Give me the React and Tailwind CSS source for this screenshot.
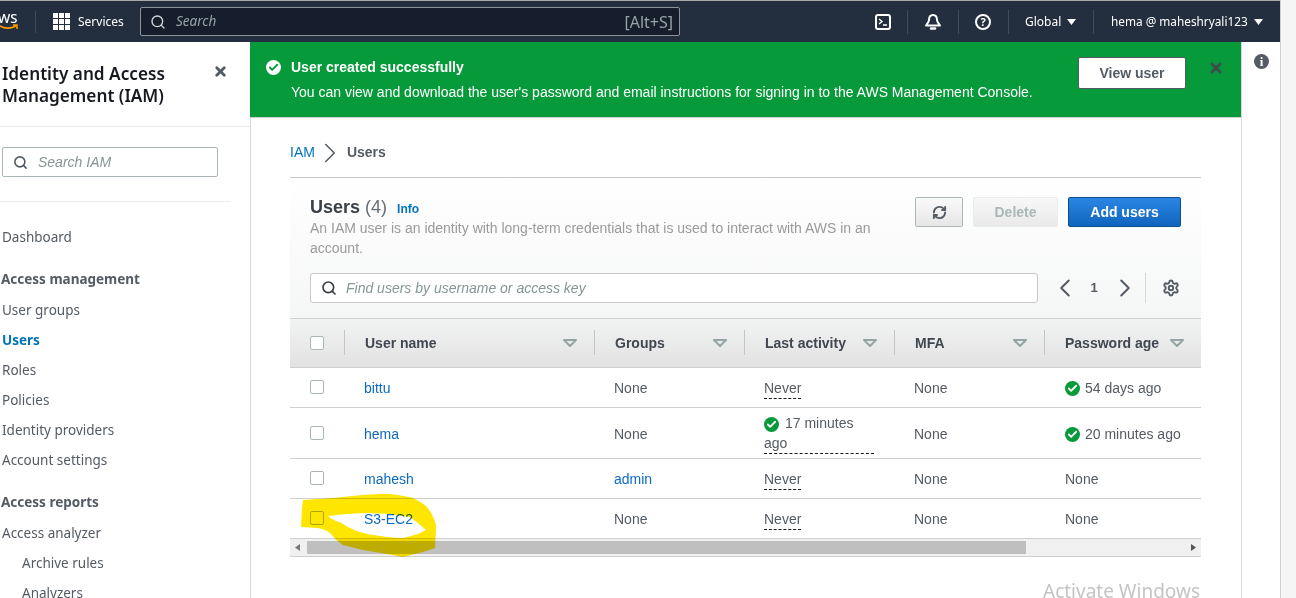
import React from "react";
import { Search, X, ChevronLeft, ChevronRight, RefreshCw, Settings, Check } from "lucide-react";

const sans = "font-['Noto_Sans','Open_Sans',sans-serif]";
const arial = "font-['Liberation_Sans',Arial,sans-serif]";

function NavLink({ children, active, indent }) {
  return (
    <div
      className={`h-[30px] flex items-center text-[13.5px] ${indent ? "pl-[22px]" : "pl-[2px]"} ${
        active ? "text-[#0073bb] font-bold" : "text-[#545b64]"
      }`}
    >
      {children}
    </div>
  );
}

function NavHeading({ children }) {
  return <div className="pl-[1px] mt-[12px] h-[31px] flex items-center text-[13.5px] font-bold text-[#545b64]">{children}</div>;
}

function CheckDot({ className = "" }) {
  return (
    <span className={`inline-flex items-center justify-center w-[15px] h-[15px] rounded-full bg-[#069a3a] shrink-0 ${className}`}>
      <Check size={11} strokeWidth={4} className="text-white" />
    </span>
  );
}

function HeadCell({ label, w, last }) {
  return (
    <div className={`relative flex items-center justify-between h-full shrink-0 pl-5 ${w} ${last ? "pr-[17px]" : "pr-[18px]"}`}>
      <span className="text-[14px] font-bold text-[#414750] whitespace-nowrap">{label}</span>
      <svg width="14" height="8" viewBox="0 0 14 8" className="shrink-0">
        <path d="M1 1h12L7 7z" fill="none" stroke="#95a5a6" strokeWidth="2" strokeLinejoin="round" />
      </svg>
      {!last && <span className="absolute right-0 top-[11px] bottom-[12px] w-px bg-[#c5c5c5]" />}
    </div>
  );
}

function Never() {
  return <span className="border-b border-dashed border-[#16191f] text-[#545b64] leading-[19px] inline-block">Never</span>;
}

function Row({ name, groups, activity, pwd, h }) {
  return (
    <div className={`flex items-center border-b border-[#cfd0d0] text-[14px] text-[#545b64] ${h}`}>
      <div className="w-[74px] pl-5 shrink-0">
        <div className="w-[14px] h-[14px] -mt-[2px] rounded-[2px] border border-[#aab7b8] bg-white" />
      </div>
      <div className="w-[250px] text-[#0d6ac0] shrink-0">{name}</div>
      <div className={`w-[150px] shrink-0 ${groups === "admin" ? "text-[#0d6ac0]" : ""}`}>{groups}</div>
      <div className="w-[150px] shrink-0">{activity}</div>
      <div className="w-[151px] shrink-0">None</div>
      <div className="flex-1 flex items-center gap-[5px] whitespace-nowrap">{pwd}</div>
    </div>
  );
}

export default function App() {
  return (
    <div className={`relative w-[1296px] h-[598px] overflow-hidden flex bg-white ${arial}`}>
      <div className="w-[1281px] shrink-0 flex flex-col border-r border-[#d0d0d0]">
        {/* top nav */}
        <header className={`h-[42px] shrink-0 border-t border-[#a9a9a9] bg-[#232f3e] flex items-center text-white ${sans}`}>
          <div className="w-[36px] h-[22px] shrink-0 border-r border-[#3f4b5b] relative overflow-hidden">
            <span className="absolute left-[-10px] top-[-2px] text-[13px] font-medium leading-[18px]">AWS</span>
            <svg className="absolute left-[-3px] top-[13px]" width="22" height="7" viewBox="0 0 22 7">
              <path d="M1 1c6 4 12 4 18 1M16 1h4v4" fill="none" stroke="#f90" strokeWidth="1.5" />
            </svg>
          </div>
          <div className="ml-[17px] shrink-0 grid grid-cols-3 gap-[1px] w-[17px]">
            {[...Array(9)].map((_, i) => (
              <span key={i} className="w-[5px] h-[5px] bg-white" />
            ))}
          </div>
          <span className="ml-[8px] text-[12px] w-[46px] whitespace-nowrap">Services</span>
          <div className="ml-[16px] w-[540px] h-[29px] shrink-0 flex items-center bg-[#161e2d] border border-[#8d9399] rounded-[2px] pl-[9px] pr-[6px]">
            <Search size={16} strokeWidth={2} className="text-[#d5dbdb]" />
            <span className="ml-[10px] text-[13.5px] italic text-[#95a5a6]">Search</span>
            <span className="ml-auto text-[16px] text-[#95a5a6]">[Alt+S]</span>
          </div>
          <div className="ml-[195px] w-[16px] h-[16px] border-2 border-white rounded-[3px] flex items-center justify-center shrink-0">
            <svg width="10" height="10" viewBox="0 0 10 10">
              <path d="M1 2l3 2.5L1 7M5 8h4" fill="none" stroke="#fff" strokeWidth="1.4" />
            </svg>
          </div>
          <span className="ml-[16px] w-px h-[24px] bg-[#414d5c]" />
          <svg className="ml-[16px] shrink-0" width="18" height="18" viewBox="0 0 18 18">
            <path d="M9 2c-3 0-4 2.500-4 5 0 2-2 4-3 5.500h14C15 11 13 9 13 7c0-2.500-1-5-4-5z" fill="none" stroke="#fff" strokeWidth="2" strokeLinejoin="round" />
            <path d="M7 15.500h4" stroke="#fff" strokeWidth="2.500" strokeLinecap="round" />
          </svg>
          <span className="ml-[16px] w-px h-[24px] bg-[#414d5c]" />
          <div className="ml-[16px] w-[16px] h-[16px] rounded-full border-2 border-white flex items-center justify-center text-[11px] font-bold leading-none shrink-0">?</div>
          <span className="ml-[17px] w-px h-[24px] bg-[#414d5c]" />
          <span className="ml-[16px] w-[36px] text-[12px]">Global</span>
          <svg className="ml-[6px]" width="9" height="6" viewBox="0 0 9 6"><path d="M0 0h9L4.500 6z" fill="#fff" /></svg>
          <span className="ml-[17px] w-px h-[24px] bg-[#414d5c]" />
          <span className="ml-[17px] text-[11.8px] whitespace-nowrap">hema @ maheshryali123</span>
          <svg className="ml-[6px]" width="9" height="6" viewBox="0 0 9 6"><path d="M0 0h9L4.500 6z" fill="#fff" /></svg>
        </header>

        <div className="flex-1 flex min-h-0">
          {/* sidebar */}
          <aside className={`w-[250px] shrink-0 flex flex-col overflow-hidden ${sans}`}>
            <div className="h-[85px] shrink-0 border-b border-[#eaeded] pl-[2px] pr-[22px] pt-[21px] flex justify-between">
              <h2 className="text-[17.2px] leading-[22px] font-semibold text-[#16191f]">
                Identity and Access
                <br />
                Management (IAM)
              </h2>
              <X size={15} strokeWidth={4.500} className="text-[#545b64] mt-[1px]" />
            </div>
            <div className="h-[75px] shrink-0 border-b border-[#eaeded] w-[231px] pl-[2px] pt-[20px]">
              <div className="w-[216px] h-[30px] border border-[#aab7b8] rounded-[2px] flex items-center pl-[10px]">
                <Search size={15} strokeWidth={2.500} className="text-[#545b64]" />
                <span className={`ml-[10px] text-[14px] italic text-[#879596] ${arial}`}>Search IAM</span>
              </div>
            </div>
            <div className="pt-[20px]">
              <NavLink>Dashboard</NavLink>
              <NavHeading>Access management</NavHeading>
              <NavLink>User groups</NavLink>
              <NavLink active>Users</NavLink>
              <NavLink>Roles</NavLink>
              <NavLink>Policies</NavLink>
              <NavLink>Identity providers</NavLink>
              <NavLink>Account settings</NavLink>
              <NavHeading>Access reports</NavHeading>
              <NavLink>Access analyzer</NavLink>
              <NavLink indent>Archive rules</NavLink>
              <NavLink indent>Analyzers</NavLink>
            </div>
          </aside>

          {/* main */}
          <main className="w-[991px] shrink-0 flex flex-col">
            <div className="h-[76px] shrink-0 bg-[#069a3a] border-b border-b-[#d0d0d0] flex pl-[16px] text-white relative">
              <span className="w-[15px] h-[15px] rounded-full bg-white flex items-center justify-center mt-[18px] shrink-0">
                <Check size={11} strokeWidth={4} className="text-[#069a3a]" />
              </span>
              <div className="ml-[10px] text-[14px] pt-[16px]">
                <div className="font-bold leading-[19px]">User created successfully</div>
                <div className="mt-[6px] leading-[19px] whitespace-nowrap">
                  You can view and download the user's password and email instructions for signing in to the AWS Management Console.
                </div>
              </div>
              <button className="absolute left-[828px] top-[15px] w-[108px] h-[32px] bg-white border border-[#545b64] rounded-[2px] text-[14px] font-bold text-[#545b64]">
                View user
              </button>
              <X size={16} strokeWidth={4.500} className="absolute left-[958px] top-[18px] text-[#3f4a4a]" />
            </div>

            <div className="pl-[39px] pr-[40px] border-l border-[#d5dbdb] flex-1 min-h-0">
              <div className="h-[60px] pt-[10px] flex items-center text-[14px] text-[#545b64] border-b border-[#c8c8c8]">
                <span className="text-[#0073bb]">IAM</span>
                <ChevronRight size={34} strokeWidth={1.100} className="-ml-[2px] text-[#545b64]" />
                <span className="font-bold">Users</span>
              </div>

              {/* users table */}
              <div className="bg-gradient-to-b from-white to-[#f2f3f3]">
                <div className="h-[140px] px-5 relative">
                  <div className="pt-[17px] flex items-baseline">
                    <span className="text-[18px] leading-[24px] font-bold text-[#3b4048]">Users</span>
                    <span className="ml-[5px] text-[18px] leading-[24px] text-[#687078]">(4)</span>
                    <span className="ml-[10px] text-[12px] font-bold text-[#0073bb]">Info</span>
                  </div>
                  <p className="w-[580px] -mt-[1px] text-[14px] leading-[20px] text-[#9a9a9a]">
                    An IAM user is an identity with long-term credentials that is used to interact with AWS in an account.
                  </p>
                  <div className="absolute top-[19px] right-[20px] flex items-center gap-[10px]">
                    <button className="w-[48px] h-[30px] rounded-[2px] border border-[#aab7b8] bg-gradient-to-b from-[#fafafa] to-[#e6e6e6] flex items-center justify-center text-[#545b64]">
                      <RefreshCw size={15} strokeWidth={3} />
                    </button>
                    <button className="w-[85px] h-[30px] rounded-[2px] border border-[#eaeded] bg-gradient-to-b from-[#f8f8f8] to-[#eaeaea] text-[14px] font-bold text-[#aab7b8]">
                      Delete
                    </button>
                    <button className="w-[113px] h-[30px] rounded-[2px] border border-[#0b4f8f] bg-gradient-to-b from-[#2a86e4] to-[#0f65bd] text-[14px] font-bold text-white">
                      Add users
                    </button>
                  </div>
                  <div className="absolute top-[95px] left-[20px] right-[20px] flex items-center">
                    <div className="w-[728px] h-[30px] shrink-0 rounded-[3px] bg-white border border-[#c8c8c8] flex items-center pl-[10px]">
                      <Search size={16} strokeWidth={2.500} className="text-[#3a3f45]" />
                      <span className="ml-[9px] text-[14px] italic text-[#879596]">Find users by username or access key</span>
                    </div>
                    <ChevronLeft size={30} strokeWidth={1.600} className="ml-[12px] shrink-0 text-[#545b64]" />
                    <span className="ml-[9px] text-[13px] font-bold text-[#545b64] w-[10px] text-center">1</span>
                    <ChevronRight size={30} strokeWidth={1.600} className="ml-[11px] shrink-0 text-[#545b64]" />
                    <span className="ml-[5px] w-px h-[30px] bg-[#d5dbdb]" />
                    <Settings size={18} strokeWidth={2.500} className="ml-[16px] shrink-0 text-[#545b64]" />
                  </div>
                </div>
                <div className="h-[50px] flex items-center border-y border-[#cfd0d0] bg-gradient-to-b from-[#f2f3f3] to-[#e2e2e2] overflow-hidden">
                  <div className="relative w-[55px] h-full shrink-0 flex items-center pl-5">
                    <div className="w-[14px] h-[14px] rounded-[2px] border border-[#aab7b8] bg-white" />
                    <span className="absolute right-0 top-[11px] bottom-[12px] w-px bg-[#c5c5c5]" />
                  </div>
                  <HeadCell label="User name" w="w-[250px]" />
                  <HeadCell label="Groups" w="w-[150px]" />
                  <HeadCell label="Last activity" w="w-[150px]" />
                  <HeadCell label="MFA" w="w-[150px]" />
                  <HeadCell label="Password age" w="w-[156px]" last />
                </div>
              </div>
              <Row h="h-[40px] pt-[1px]" name="bittu" groups="None" activity={<Never />} pwd={<><CheckDot />54 days ago</>} />
              <Row
                h="h-[51px] pt-[2px]"
                name="hema"
                groups="None"
                activity={
                  <div className="w-[110px] -mt-[1px] leading-[20px] border-b border-dashed border-[#16191f]">
                    <CheckDot className="align-[-2px] mr-[6px]" />
                    17 minutes ago
                  </div>
                }
                pwd={<><CheckDot />20 minutes ago</>}
              />
              <Row h="h-[40px] pt-[1px]" name="mahesh" groups="admin" activity={<Never />} pwd="None" />
              <Row h="h-[40px] pt-[1px]" name="S3-EC2" groups="None" activity={<Never />} pwd="None" />
              {/* horizontal scroll */}
              <div className="h-[18px] bg-[#f0f0f0] border-b border-[#cfd0d0] flex items-center relative">
                <svg className="absolute left-[5px]" width="5" height="7" viewBox="0 0 5 7"><path d="M5 0v7L0 3.500z" fill="#777" /></svg>
                <div className="absolute left-[17px] w-[719px] h-[13px] bg-[#bfbfbf]" />
                <svg className="absolute right-[5px]" width="5" height="7" viewBox="0 0 5 7"><path d="M0 0v7l5-3.500z" fill="#555" /></svg>
              </div>
            </div>
          </main>

          {/* right info rail */}
          <div className="w-[40px] shrink-0 border-l border-[#d5dbdb] flex justify-center pt-[12px]">
            <span className="w-[15px] h-[15px] rounded-full bg-[#545b64] text-white flex items-center justify-center text-[13px] font-bold font-['Liberation_Serif',serif] leading-none">i</span>
          </div>
        </div>
      </div>
      <div className="flex-1 bg-[#f5f5f5]" />

      {/* marker scribble over the last row */}
      <svg className="absolute left-0 top-0 pointer-events-none mix-blend-multiply" width="1296" height="598" viewBox="0 0 1296 598">
        <path
          fillRule="evenodd"
          fill="#ffe600"
          d="M303 500L333 498L362 495C372 494 381 494 390 494C398 495 406 496 413 498C419 501 424 504 427 507C430 511 432 514 433 517C435 521 436 524 436 528L435 548L423 552L403 557L387 554L363 550L343 545C337 541 333 537 330 533C326 530 322 529 318 528L301 527L302 508ZM328 516C335 522 339 521 343 524C349 528 354 530 360 532C366 534 373 535 380 536C388 537 395 538 403 538L418 534L426 530C423 527 420 525 418 523C415 521 412 519 410 517L390 514L365 513L347 514Z"
        />
      </svg>

      {/* windows watermark */}
      <span className={`absolute left-[1043px] top-[580px] text-[19px] leading-[22px] text-[#c4c4c4] whitespace-nowrap ${sans}`}>
        Activate Windows
      </span>
    </div>
  );
}
